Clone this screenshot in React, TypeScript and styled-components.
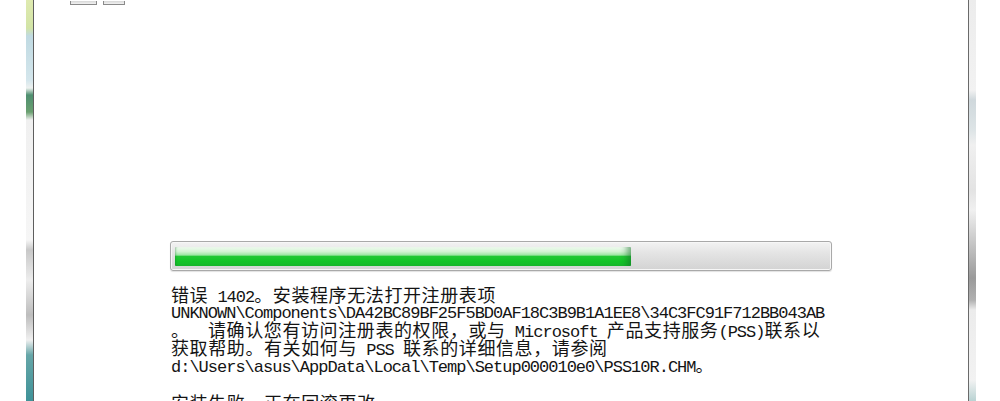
import React from 'react'
import styled, { createGlobalStyle } from 'styled-components'

const GlobalStyle = createGlobalStyle`
  html, body {
    margin: 0;
    padding: 0;
    background: #ffffff;
  }
`

const Frame = styled.div`
  display: flex;
  height: 401px;
  padding: 0 24px 0 26px;
  overflow: hidden;
  background: #ffffff;
`

const SideBorder = styled.div<{ $side: 'left' | 'right' }>`
  width: 7px;
  flex: none;
  ${({ $side }) =>
    $side === 'left'
      ? `
    border-right: 1px solid #5e5e5e;
    background: linear-gradient(
      180deg,
      #dfeab0 0px,
      #d2e4a6 28px,
      #c0dae2 36px,
      #d4e6ec 80px,
      #eef2f0 88px,
      #4f8f70 95px,
      #6aa070 112px,
      #f0f0f0 120px,
      #f6f6f6 240px,
      #c8c8c8 250px,
      #ededed 280px,
      #bdbdbd 315px,
      #f0f0f0 340px,
      #66a6a8 355px,
      #3f9298 401px
    );
  `
      : `
    border-left: 1px solid #6a6a6a;
    background: linear-gradient(
      180deg,
      #ececec 0px,
      #f2f2f2 90px,
      #cfd8dc 100px,
      #dde4e6 130px,
      #f0f0f0 145px,
      #e3e3e3 190px,
      #f0f0f0 210px,
      #9a9a9a 278px,
      #b0b0b0 300px,
      #ececec 310px,
      #f2f2f2 380px,
      #b9d3d3 401px
    );
  `}
`

const Content = styled.div`
  flex: 1;
  display: flex;
  flex-direction: column;
  min-width: 0;

  > * {
    flex-shrink: 0;
  }
`

const CaptionStrip = styled.div`
  height: 5px;
  display: flex;
  align-items: flex-end;
  gap: 6px;
  padding-left: 36px;
`

const CaptionButton = styled.div<{ $w: number }>`
  width: ${({ $w }) => $w}px;
  height: 4px;
  box-sizing: border-box;
  border: 1px solid #8a8a8a;
  border-top: none;
  background: linear-gradient(180deg, #d6d6d6, #f2f2f2);
`

const ProgressTrack = styled.div`
  margin: 236px 0 0 136px;
  width: 662px;
  height: 30px;
  box-sizing: border-box;
  border: 1px solid #a9a9a9;
  border-radius: 3px;
  padding: 5px 4px 4px 4px;
  background: linear-gradient(180deg, #f3f3f3 0%, #e4e4e4 40%, #d3d3d3 100%);
  box-shadow: inset 0 0 0 1px #f7f7f7, 0 1px 1px rgba(0, 0, 0, 0.12);
`

const ProgressFill = styled.div`
  height: 100%;
  border-radius: 1px;
  background: linear-gradient(
    180deg,
    #f2fbf2 0%,
    #d2f3d2 25%,
    #9ee6a4 42%,
    #22c834 50%,
    #14c428 75%,
    #18b82c 100%
  );
  box-shadow: inset -10px 0 6px -6px rgba(20, 110, 40, 0.55), inset 2px 0 2px -1px rgba(20, 110, 40, 0.35);
`

const Message = styled.div`
  margin: 15px 0 0 137px;
  color: #141414;
`

const Line = styled.div<{ $gap?: number }>`
  height: 17.6px;
  line-height: 17.6px;
  white-space: pre;
  margin-top: ${({ $gap }) => $gap ?? 0}px;
`

const Han = styled.span`
  font-family: 'Noto Sans CJK SC', sans-serif;
  font-size: 18px;
  letter-spacing: 0.6px;
`

const Mono = styled.span`
  font-family: 'Liberation Mono', monospace;
  font-size: 17px;
  letter-spacing: -1px;
`

const cjk = /([\u3000-\u303f\u4e00-\u9fff\uff00-\uffef]+)/

function MixedLine({ text, gap }: { text: string; gap?: number }) {
  const parts = text.split(cjk).filter((p) => p.length > 0)
  return (
    <Line $gap={gap}>
      {parts.map((p, i) => (cjk.test(p) ? <Han key={i}>{p}</Han> : <Mono key={i}>{p}</Mono>))}
    </Line>
  )
}

const errorLines = [
  '错误 1402。安装程序无法打开注册表项',
  'UNKNOWN\\Components\\DA42BC89BF25F5BD0AF18C3B9B1A1EE8\\34C3FC91F712BB043AB',
  '。  请确认您有访问注册表的权限，或与 Microsoft 产品支持服务(PSS)联系以',
  '获取帮助。有关如何与 PSS 联系的详细信息，请参阅',
  'd:\\Users\\asus\\AppData\\Local\\Temp\\Setup000010e0\\PSS10R.CHM。',
]

export default function App() {
  const progress = 0.7

  return (
    <>
      <GlobalStyle />
      <Frame>
        <SideBorder $side="left" />
        <Content>
          <CaptionStrip>
            <CaptionButton $w={27} />
            <CaptionButton $w={22} />
          </CaptionStrip>
          <ProgressTrack>
            <ProgressFill style={{ width: `${progress * 100}%` }} />
          </ProgressTrack>
          <Message>
            {errorLines.map((t, i) => (
              <MixedLine key={i} text={t} />
            ))}
            <MixedLine text="安装失败，正在回滚更改" gap={20} />
          </Message>
        </Content>
        <SideBorder $side="right" />
      </Frame>
    </>
  )
}
